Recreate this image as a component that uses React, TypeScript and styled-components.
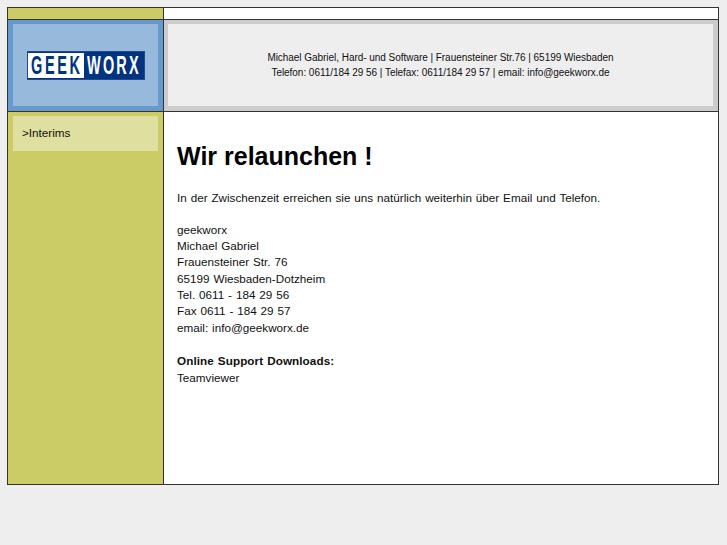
import React from "react";
import styled, { createGlobalStyle } from "styled-components";

const Global = createGlobalStyle`
  html, body { margin: 0; padding: 0; background: #eeeeee; }
  body { font-family: "Liberation Sans", Arial, sans-serif; color: #000; }
`;

const Page = styled.div`
  height: 545px;
  padding: 7px 8px 0 7px;
  box-sizing: border-box;
  overflow: hidden;
`;

const Frame = styled.div`
  width: 712px;
  height: 478px;
  box-sizing: border-box;
  border: 1px solid #333;
  display: grid;
  grid-template-columns: 156px 1fr;
  grid-template-rows: 12px 92px 1fr;
  background: #fff;
`;

const TopLeft = styled.div`
  background: #cccc66;
  border-right: 1px solid #333;
  border-bottom: 1px solid #333;
`;

const TopRight = styled.div`
  background: #fff;
  border-bottom: 1px solid #333;
`;

const BannerCell = styled.div<{ $edge: string; $left: number; $divider?: boolean }>`
  display: flex;
  box-sizing: border-box;
  min-width: 0;
  background: ${(p) => p.$edge};
  padding: 4px 5px 5px ${(p) => p.$left}px;
  border-bottom: 1px solid #333;
  border-right: ${(p) => (p.$divider ? "1px solid #333" : "0")};
`;

const LogoPanel = styled.div`
  flex: 1;
  background: #96b9dc;
  display: flex;
  align-items: center;
  justify-content: center;
`;

const Logo = styled.div`
  display: flex;
  width: 118px;
  height: 29px;
  box-sizing: border-box;
  border: 1px solid #1f4a8c;
  background: #003380;
  font-family: "Liberation Sans", sans-serif;
  font-weight: 700;
  font-size: 25px;
  line-height: 27px;
`;

const LogoPart = styled.span<{ $width: number; $light?: boolean }>`
  flex: none;
  width: ${(p) => p.$width}px;
  white-space: nowrap;
  box-sizing: border-box;
  background: ${(p) => (p.$light ? "#fff" : "transparent")};
  color: ${(p) => (p.$light ? "#003380" : "#fff")};
  margin: ${(p) => (p.$light ? "1px 0" : "0")};
  line-height: ${(p) => (p.$light ? "25px" : "27px")};
  padding-left: 3px;
`;

const LogoLetters = styled.span<{ $track: number }>`
  display: inline-block;
  transform: scaleX(0.58);
  transform-origin: left center;
  letter-spacing: ${(p) => p.$track}px;
`;

const HeaderPanel = styled.div`
  flex: 1;
  background: #eeeeee;
  display: flex;
  flex-direction: column;
  align-items: center;
  justify-content: center;
  font-size: 10px;
  letter-spacing: -0.04px;
  line-height: 15px;
  color: #111;
`;

const Sidebar = styled.nav`
  background: #cccc66;
  border-right: 1px solid #333;
  padding: 4px 5px 0 5px;
`;

const NavItem = styled.a`
  display: block;
  height: 35px;
  background: #dfdf9f;
  padding: 10px 0 0 9px;
  box-sizing: border-box;
  font-size: 11.7px;
  word-spacing: 0.6px;
  line-height: 14px;
  color: #111;
`;

const Main = styled.main`
  padding: 28px 0 0 13px;
`;

const Title = styled.h1`
  margin: 0 0 18px;
  font-size: 25px;
  line-height: 32px;
  font-weight: 700;
  color: #000;
`;

const Para = styled.p`
  margin: 0;
  font-size: 11.7px;
  word-spacing: 0.65px;
  line-height: 16.3px;
  color: #111;
`;

const Address = styled(Para)`
  margin-top: 15.6px;
`;

const Support = styled(Para)`
  margin-top: 17.5px;
`;

const Strong = styled.b`
  letter-spacing: 0.08px;
`;

export default function App() {
  return (
    <Page>
      <Global />
      <Frame>
        <TopLeft />
        <TopRight />
        <BannerCell $edge="#6699cc" $left={5} $divider>
          <LogoPanel>
            <Logo>
              <LogoPart $light $width={56}>
                <LogoLetters $track={4.5}>GEEK</LogoLetters>
              </LogoPart>
              <LogoPart $width={60}>
                <LogoLetters $track={3.8}>WORX</LogoLetters>
              </LogoPart>
            </Logo>
          </LogoPanel>
        </BannerCell>
        <BannerCell $edge="#cccccc" $left={4}>
          <HeaderPanel>
            <div>Michael Gabriel, Hard- und Software | Frauensteiner Str.76 | 65199 Wiesbaden</div>
            <div>Telefon: 0611/184 29 56 | Telefax: 0611/184 29 57 | email: info@geekworx.de</div>
          </HeaderPanel>
        </BannerCell>
        <Sidebar>
          <NavItem>&gt;Interims</NavItem>
        </Sidebar>
        <Main>
          <Title>Wir relaunchen !</Title>
          <Para>In der Zwischenzeit erreichen sie uns natürlich weiterhin über Email und Telefon.</Para>
          <Address>
            geekworx<br />
            Michael Gabriel<br />
            Frauensteiner Str. 76<br />
            65199 Wiesbaden-Dotzheim<br />
            Tel. 0611 - 184 29 56<br />
            Fax 0611 - 184 29 57<br />
            email: info@geekworx.de
          </Address>
          <Support>
            <Strong>Online Support Downloads:</Strong><br />
            Teamviewer
          </Support>
        </Main>
      </Frame>
    </Page>
  );
}
